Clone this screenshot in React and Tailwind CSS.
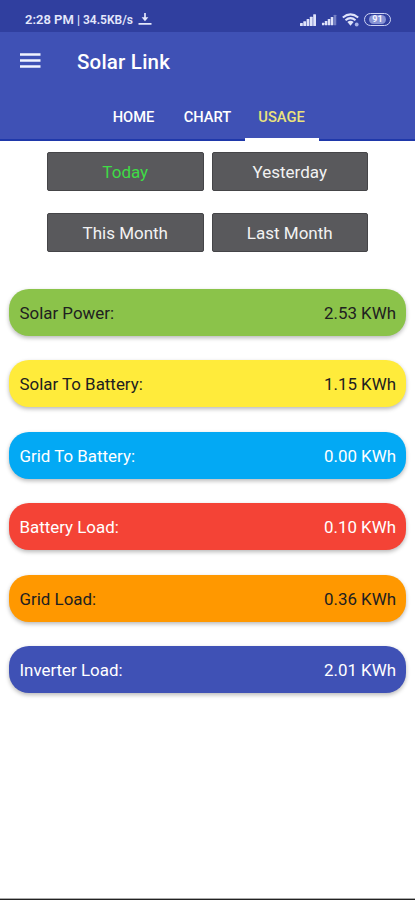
import React from 'react';

const tabs = [
  { name: 'HOME', className: 'w-[74px] text-white' },
  { name: 'CHART', className: 'w-[74px] text-white' },
  { name: 'USAGE', className: 'w-[74px] text-[#ebe37c] border-b-[3px] border-white' },
];

const periods = ['Today', 'Yesterday', 'This Month', 'Last Month'];

const readings = [
  { label: 'Solar Power:', value: '2.53 KWh', color: 'bg-[#8bc34a] text-[#202020]' },
  { label: 'Solar To Battery:', value: '1.15 KWh', color: 'bg-[#ffeb3b] text-[#202020]' },
  { label: 'Grid To Battery:', value: '0.00 KWh', color: 'bg-[#03a9f4] text-white' },
  { label: 'Battery Load:', value: '0.10 KWh', color: 'bg-[#f44336] text-white' },
  { label: 'Grid Load:', value: '0.36 KWh', color: 'bg-[#ff9800] text-[#202020]' },
  { label: 'Inverter Load:', value: '2.01 KWh', color: 'bg-[#3f51b5] text-white' },
];

const Signal = ({ weak }) => (
  <svg width="17" height="12" viewBox="0 0 17 12" fill="#dfe3fa">
    <rect x="0" y="9" width="2.8" height="3" rx="0.5" />
    <rect x="3.3" y="7.2" width="2.8" height="4.8" rx="0.5" />
    <rect x="6.6" y="5" width="2.8" height="7" rx="0.5" />
    <rect x="9.9" y="2.8" width="2.8" height="9.2" rx="0.5" />
    <rect x="13.2" y="0.3" width="2.8" height="11.7" rx="0.5" opacity={weak ? 0.4 : 1} />
  </svg>
);

const StatusBar = () => (
  <div className="h-8 bg-[#303f9f] flex items-center justify-between pt-[7px] pl-[25px] pr-6 text-[#e4e7fb]">
    <div className="flex items-baseline whitespace-nowrap font-semibold">
      <span className="text-[13px] w-[52px]">2:28 PM</span>
      <span className="text-[12px] w-[59px]">| 34.5KB/s</span>
      <svg className="ml-[2px] translate-y-px" width="14" height="12" viewBox="0 0 14 12" fill="none" stroke="currentColor" strokeWidth="1.7">
        <path d="M7 0v7M0.5 10.8h13" />
        <path d="M3.6 4.2h6.8L7 8.2z" fill="currentColor" stroke="none" />
      </svg>
    </div>
    <div className="flex items-center">
      <Signal />
      <div className="ml-1 scale-90">
        <Signal weak />
      </div>
      <svg className="ml-[4px]" width="18" height="14" viewBox="0 0 18 14" fill="none" stroke="#dfe3fa" strokeWidth="2">
        <path d="M0.8 4.6Q8.5-1.8 16.2 4.6" />
        <path d="M3.5 7.3Q8.5 3 13.5 7.3" />
        <path d="M5.4 9.1Q8.5 6.6 11.6 9.1L8.5 12.8z" fill="#dfe3fa" stroke="none" />
        <circle cx="14.7" cy="11.5" r="1.9" fill="#aab4e8" stroke="none" />
      </svg>
      <div className="ml-[4px] w-[27px] h-[13px] p-[1px] rounded-full border-[1.5px] border-[#cdd3f4]">
        <div className="mx-auto w-[17px] h-full rounded-full bg-[#8793d4] text-[#f4f5ff] text-[9px] leading-[9px] font-bold text-center">91</div>
      </div>
    </div>
  </div>
);

const App = () => {
  return (
    <div className="w-full h-[900px] bg-white font-[Roboto,sans-serif] flex flex-col overflow-hidden">
      <StatusBar />

      {/* Toolbar and tabs */}
      <header className="h-[109px] bg-[#3f51b5] border-b-2 border-[#1f38aa] flex flex-col justify-between">
        <div className="flex items-center h-[60px] pl-5">
          <svg className="-mt-[5px]" width="21" height="16" viewBox="0 0 21 16" stroke="#f1f3ff" strokeWidth="2.4">
            <path d="M0 2.5h20.5M0 8.5h20.5M0 14.5h20.5" />
          </svg>
          <h1 className="ml-[36px] text-[20.5px] font-medium text-white tracking-[0.2px]">Solar Link</h1>
        </div>
        <nav className="flex pl-[97px] h-[48px] -mb-[2px]">
          {tabs.map((tab) => (
            <button
              key={tab.name}
              className={`h-full pt-[1px] pr-[1px] flex justify-center text-[14.7px] leading-[46px] font-medium ${tab.className}`}
            >
              {tab.name}
            </button>
          ))}
        </nav>
      </header>

      {/* Period buttons */}
      <div className="grid grid-cols-2 gap-x-2 gap-y-[22px] px-[47px] pt-[11px]">
        {periods.map((period) => (
          <button
            key={period}
            className={`h-[39px] pt-[2px] rounded-[2px] border border-[#454548] bg-[#59595c] text-[17px] ${period === 'Today' ? 'text-[#3fdc46]' : 'text-[#f2f2f2]'}`}
          >
            {period}
          </button>
        ))}
      </div>

      {/* Energy readings */}
      <div className="flex flex-col gap-[24.5px] px-[9px] pt-[36.5px]">
        {readings.map((item) => (
          <div
            key={item.label}
            className={`h-[47px] pt-[3px] pl-[10.5px] pr-[10px] flex items-center justify-between rounded-[20px] shadow-[0_2px_4px_rgba(0,0,0,0.28)] text-[16.9px] ${item.color}`}
          >
            <span>{item.label}</span>
            <span>{item.value}</span>
          </div>
        ))}
      </div>

      <div className="mt-auto h-[2px] bg-[#222222] border-t border-[#aaaaaa]" />
    </div>
  );
};

export default App;
